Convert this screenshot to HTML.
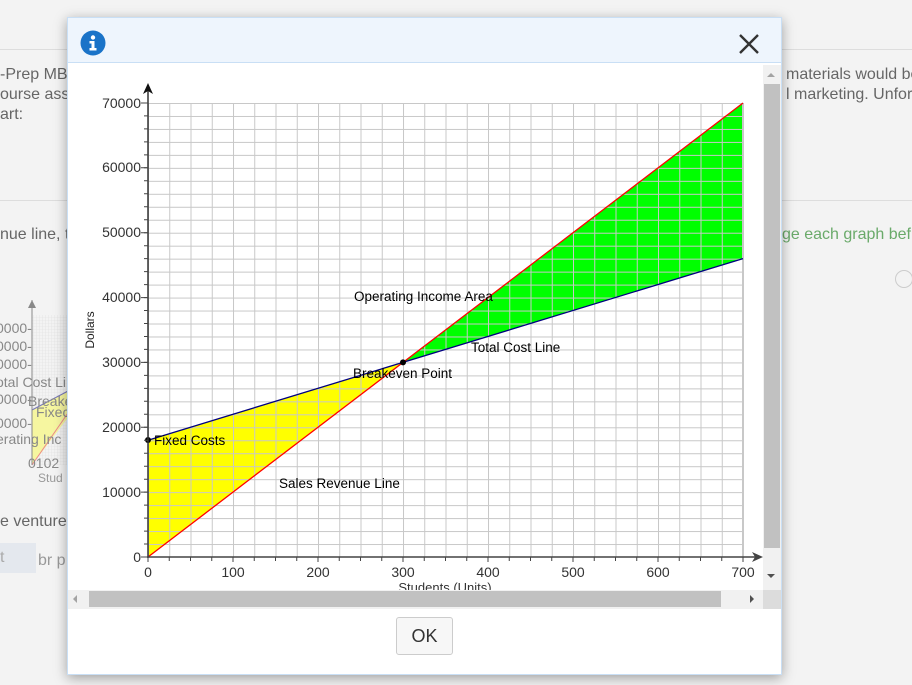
<!DOCTYPE html>
<html><head><meta charset="utf-8"><style>
html,body{margin:0;padding:0;width:912px;height:685px;overflow:hidden;background:#f3f3f3;font-family:"Liberation Sans",Arial,sans-serif;position:relative}
.bg{position:absolute;color:#666;font-size:16px;white-space:nowrap}
</style></head><body>
<div style="position:absolute;left:0;top:49px;width:912px;height:1px;background:#ddd"></div>
<div style="position:absolute;left:0;top:200px;width:912px;height:1px;background:#ddd"></div>
<div class="bg" style="left:0;top:65px;line-height:20px">-Prep MB<br>ourse ass<br>art:</div>
<div class="bg" style="left:782px;top:65px;line-height:20px;left:786px">materials would be<br>l marketing. Unfort</div>
<div class="bg" style="left:0;top:226px">nue line, t</div>
<div class="bg" style="left:782px;top:226px;color:#6aaa6a">ge each graph bef</div>
<div style="position:absolute;left:895px;top:270px;width:16px;height:16px;border:1px solid #ccc;border-radius:50%"></div>
<div class="bg" style="left:0;top:513px">e venture</div>
<div style="position:absolute;left:0;top:543px;width:36px;height:30px;background:#e4e8ee;color:#aaa;font-size:16px;line-height:30px">t</div>
<div class="bg" style="left:38px;top:552px;color:#999">br p</div>
<svg style="position:absolute;left:0;top:290px" width="70" height="200">
<defs><pattern id="m" width="3" height="3" patternUnits="userSpaceOnUse"><path d="M0 0H3M0 0V3" stroke="#ddd" stroke-width="0.6" fill="none"/></pattern></defs>
<rect x="32" y="25" width="38" height="150" fill="url(#m)"/>
<polygon points="32,120 70,100 70,125 32,175" fill="#f6f6a0"/>
<line x1="32" y1="120" x2="70" y2="100" stroke="#7777bb"/>
<line x1="32" y1="175" x2="70" y2="120" stroke="#ee8888"/>
<line x1="32" y1="10" x2="32" y2="175" stroke="#888"/>
<path d="M28 18l4-8 4 8z" fill="#888"/>
<g font-size="14" fill="#888">
<text x="-4" y="43">0000-</text><text x="-4" y="61">0000-</text><text x="-4" y="79">0000-</text>
<text x="-4" y="97">otal Cost Li</text><text x="-4" y="114">0000-</text><text x="28" y="116">Breake</text>
<text x="36" y="127">Fixec</text><text x="-4" y="138">0000-</text>
<text x="-4" y="154">erating Inc</text>
<text x="28" y="178">0102</text>
</g>
<text x="38" y="192" font-size="12" fill="#999">Stud</text>
</svg>

<div style="position:absolute;left:67px;top:17px;width:713px;height:656px;background:#fff;border:1px solid #c9dff5;box-shadow:0 3px 12px rgba(0,0,0,.35)">
<div style="height:44px;background:#eef5fd;border-bottom:1px solid #c9dff5;position:relative">
<svg style="position:absolute;left:12px;top:12px" width="26" height="26"><circle cx="13" cy="13" r="12.5" fill="#1a73c8"/><circle cx="13" cy="7.5" r="2.2" fill="#fff"/><path d="M9.5 11h5v7h2v2.5h-7V18h2v-4.5h-2z" fill="#fff"/></svg>
<svg style="position:absolute;left:670px;top:15px" width="22" height="22"><path d="M2 2L20 20M20 2L2 20" stroke="#333" stroke-width="2.4"/></svg>
</div>
<div style="position:absolute;left:328px;top:599px;width:55px;height:36px;border:1px solid #ccc;border-radius:3px;background:#f7f7f7;font-size:18px;color:#333;text-align:center;line-height:36px">OK</div>
</div>

<svg style="position:absolute;left:0;top:0" width="912" height="685">
<defs>
<pattern id="g" x="148" y="103" width="21.25" height="12.9714" patternUnits="userSpaceOnUse">
<path d="M0 0H21.25M0 0V12.9714" stroke="#c8c8c8" stroke-width="2" fill="none"/>
</pattern>
<clipPath id="c"><rect x="68" y="63" width="695" height="527"/></clipPath>
</defs>
<g clip-path="url(#c)">
<polygon points="148,440.2 148,557 403,362.4 " fill="#ffff00"/>
<polygon points="403,362.4 743,103 743,258.6" fill="#00ff00"/>
<rect x="148" y="103" width="595" height="454" fill="url(#g)"/>
<line x1="743" y1="103" x2="743" y2="557" stroke="#c8c8c8" stroke-width="2"/>
<line x1="148" y1="557" x2="743" y2="103" stroke="#ff0000" stroke-width="1.3"/>
<line x1="148" y1="440.2" x2="743" y2="258.6" stroke="#000080" stroke-width="1.3"/>
<circle cx="148" cy="440" r="3" fill="#000"/>
<circle cx="403" cy="362.4" r="3" fill="#000"/>
<line x1="148" y1="88" x2="148" y2="558" stroke="#333" stroke-width="1.5"/>
<path d="M143 94L148 83L153 94L148 91Z" fill="#111"/>
<line x1="147" y1="557" x2="756" y2="557" stroke="#444" stroke-width="1.5"/>
<path d="M752 552L763 557L752 562L755 557Z" fill="#444"/>
<g stroke="#444" stroke-width="1">
<path d="M144 557h4M144 544h4M144 531.1h4M144 518.1h4M144 505.1h4M144 492.1h4M144 479.2h4M144 466.2h4M144 453.2h4M144 440.3h4M144 427.3h4M144 414.3h4M144 401.3h4M144 388.4h4M144 375.4h4M144 362.4h4M144 349.4h4M144 336.5h4M144 323.5h4M144 310.5h4M144 297.6h4M144 284.6h4M144 271.6h4M144 258.6h4M144 245.7h4M144 232.7h4M144 219.7h4M144 206.7h4M144 193.8h4M144 180.8h4M144 167.8h4M144 154.9h4M144 141.9h4M144 128.9h4M144 115.9h4M144 103h4"/>
<path d="M141 557h7M141 492.1h7M141 427.3h7M141 362.4h7M141 297.6h7M141 232.7h7M141 167.8h7M141 103h7"/>
<path d="M148 557v5M169.25 557v4M190.5 557v4M211.75 557v4M233 557v5M254.25 557v4M275.5 557v4M296.75 557v4M318 557v5M339.25 557v4M360.5 557v4M381.75 557v4M403 557v5M424.25 557v4M445.5 557v4M466.75 557v4M488 557v5M509.25 557v4M530.5 557v4M551.75 557v4M573 557v5M594.25 557v4M615.5 557v4M636.75 557v4M658 557v5M679.25 557v4M700.5 557v4M721.75 557v4M743 557v5"/>
</g>
<g font-size="14" fill="#333" text-anchor="end">
<text x="141" y="562">0</text><text x="141" y="497">10000</text><text x="141" y="432">20000</text><text x="141" y="367">30000</text><text x="141" y="302">40000</text><text x="141" y="237">50000</text><text x="141" y="172">60000</text><text x="141" y="108">70000</text>
</g>
<g font-size="14" fill="#333" text-anchor="middle">
<text x="148" y="577">0</text><text x="233" y="577">100</text><text x="318" y="577">200</text><text x="403" y="577">300</text><text x="488" y="577">400</text><text x="573" y="577">500</text><text x="658" y="577">600</text><text x="743" y="577">700</text>
<text x="445" y="592" font-size="13">Students (Units)</text>
</g>
<text transform="translate(94,330) rotate(-90)" font-size="12" fill="#222" text-anchor="middle">Dollars</text>
<g font-size="13.5" fill="#000">
<text x="154" y="445">Fixed Costs</text>
<text x="354" y="301">Operating Income Area</text>
<text x="471" y="352">Total Cost Line</text>
<text x="353" y="378">Breakeven Point</text>
<text x="279" y="488">Sales Revenue Line</text>
</g>
</g>
<rect x="763" y="65" width="18" height="525" fill="#f1f1f1"/>
<rect x="764" y="84" width="16" height="464" fill="#c1c1c1"/>
<path d="M767 77l4-4 4 4z" fill="#a3a3a3"/>
<path d="M767 574l4 4 4-4z" fill="#505050"/>
<rect x="68" y="590" width="713" height="19" fill="#f1f1f1"/>
<rect x="763" y="590" width="18" height="19" fill="#dcdcdc"/>
<rect x="89" y="591" width="632" height="16" fill="#c1c1c1"/>
<path d="M77 595l-4 4 4 4z" fill="#a3a3a3"/>
<path d="M750 595l4 4-4 4z" fill="#505050"/>
</svg>
</body></html>
